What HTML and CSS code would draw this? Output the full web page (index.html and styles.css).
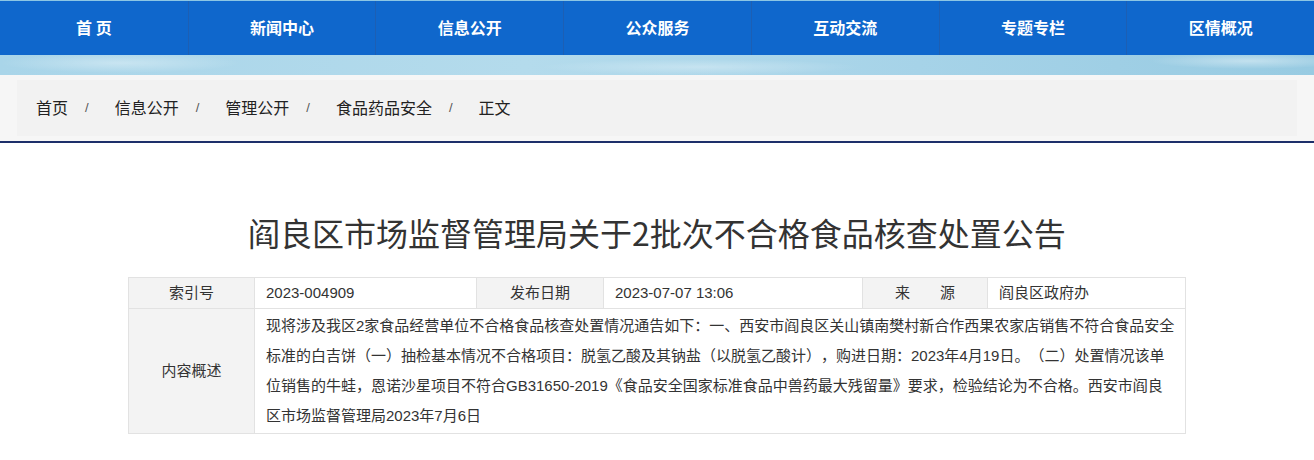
FILE: index.html
```html
<!DOCTYPE html>
<html lang="zh-CN">
<head>
  <meta charset="UTF-8" />
  <meta name="viewport" content="width=device-width, initial-scale=1.0"/>
  <title>阎良区市场监督管理局关于2批次不合格食品核查处置公告</title>
  <link rel="stylesheet" href="styles.css">
</head>
<body>
  <div class="nav">
    <a href="#">首 页</a>
    <a href="#">新闻中心</a>
    <a href="#">信息公开</a>
    <a href="#">公众服务</a>
    <a href="#">互动交流</a>
    <a href="#">专题专栏</a>
    <a href="#">区情概况</a>
  </div>
  <div class="sky"></div>

  <div class="crumb-wrap">
    <div class="crumb">
      <a href="#">首页</a><span class="sep">/</span>
      <a href="#">信息公开</a><span class="sep">/</span>
      <a href="#">管理公开</a><span class="sep">/</span>
      <a href="#">食品药品安全</a><span class="sep">/</span>
      <span>正文</span>
    </div>
  </div>

  <div class="main">
    <h1>阎良区市场监督管理局关于2批次不合格食品核查处置公告</h1>
    <table class="info">
      <tr>
        <th class="c1">索引号</th>
        <td class="c2">2023-004909</td>
        <th class="c3">发布日期</th>
        <td class="c4">2023-07-07 13:06</td>
        <th class="c5">来&emsp;&emsp;源</th>
        <td>阎良区政府办</td>
      </tr>
      <tr>
        <th>内容概述</th>
        <td colspan="5" class="summary">现将涉及我区2家食品经营单位不合格食品核查处置情况通告如下：一、西安市阎良区关山镇南樊村新合作西果农家店销售不符合食品安全标准的白吉饼（一）抽检基本情况不合格项目：脱氢乙酸及其钠盐（以脱氢乙酸计），购进日期：2023年4月19日。（二）处置情况该单位销售的牛蛙，恩诺沙星项目不符合GB31650-2019《食品安全国家标准食品中兽药最大残留量》要求，检验结论为不合格。西安市阎良区市场监督管理局2023年7月6日</td>
      </tr>
    </table>
  </div>
</body>
</html>
```

FILE: styles.css
```css
body {
  margin: 0;
  padding: 0;
  background: #fff;
  color: #333;
  font-family: "Liberation Sans", "Noto Sans CJK SC", sans-serif;
  text-spacing-trim: space-all;
}
a {
  color: inherit;
  text-decoration: none;
}
.nav {
  display: grid;
  grid-template-columns: repeat(7, 1fr);
  height: 54px;
  background: #0f67cc;
  border-top: 1px solid #8cc6e4;
}
.nav a {
  display: flex;
  align-items: center;
  justify-content: center;
  padding-bottom: 3px;
  color: #fff;
  font-family: "Noto Sans CJK SC", sans-serif;
  font-weight: bold;
  font-size: 16px;
  border-left: 1px solid #1c5fb4;
}
.nav a:first-child {
  border-left: none;
}
.sky {
  height: 20px;
  background:
    radial-gradient(ellipse 120px 10px at 120px 8px, rgba(255,255,255,0.35), transparent),
    radial-gradient(ellipse 160px 8px at 700px 12px, rgba(255,255,255,0.3), transparent),
    radial-gradient(ellipse 100px 8px at 1250px 6px, rgba(255,255,255,0.4), transparent),
    linear-gradient(90deg, #a9d5e9, #b4dbec 40%, #a6d3e8 70%, #98cbe2);
}
.crumb-wrap {
  background: #f6f6f6;
  padding: 5px 17px;
  border-bottom: 2px solid #1d2f6a;
}
.crumb {
  background: #f2f2f2;
  height: 56px;
  display: flex;
  align-items: center;
  padding-left: 19px;
  padding-bottom: 2px;
  box-sizing: border-box;
  font-family: "Noto Sans CJK SC", sans-serif;
  font-size: 16px;
  color: #222;
}
.crumb .sep {
  font-family: "Liberation Sans", sans-serif;
  font-size: 13px;
  color: #555;
  margin: 0 26px 0 17px;
}
.main {
  width: 1058px;
  margin: 0 auto;
}
h1 {
  margin: 69px 0 25px;
  font-family: "Noto Sans CJK SC", sans-serif;
  font-weight: normal;
  font-size: 32px;
  line-height: 40px;
  text-align: center;
  color: #333;
}
.info {
  width: 100%;
  border-collapse: collapse;
  font-size: 15px;
  color: #333;
}
.info th,
.info td {
  border: 1px solid #e2e2e2;
  line-height: 30px;
  padding: 0 11px;
  text-align: left;
  font-weight: normal;
}
.info th {
  background: #f3f3f3;
  text-align: center;
}
.info .c1 { width: 103px; }
.info .c2 { width: 199px; }
.info .c3 { width: 104px; }
.info .c4 { width: 236px; }
.info .c5 { width: 102px; }
.info .summary {
  padding: 2px 10px 2px 11px;
  line-height: 30px;
}
```
